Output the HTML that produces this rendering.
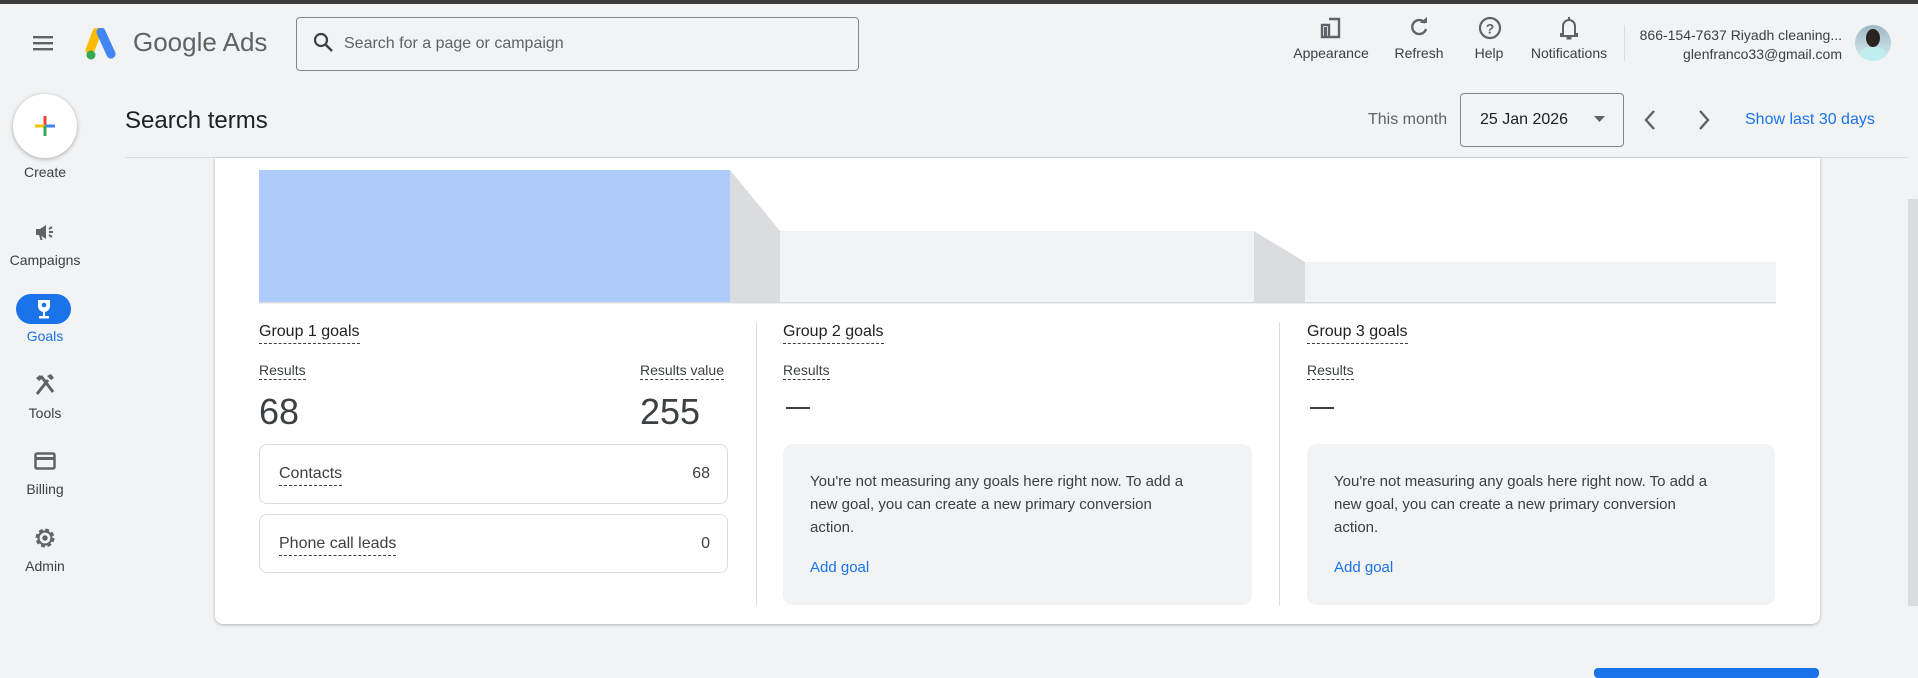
<!DOCTYPE html>
<html><head><meta charset="utf-8"><style>
*{box-sizing:border-box;margin:0;padding:0}
body{width:1918px;height:671px;overflow:hidden;background:#f1f3f4;font-family:"Liberation Sans",Arial,sans-serif;color:#3c4043;position:relative}
.a{position:absolute}
.lbl{font-size:14px;color:#3c4043;text-align:center;white-space:nowrap}
.dash{border-bottom:1.5px dashed #3c4043;padding-bottom:2px}
.dash2{border-bottom:1px dashed #3c4043;padding-bottom:1px}
.gbox{background:#f1f3f4;border-radius:10px}
.gbox p{font-size:15px;line-height:23px;color:#3c4043}
.gbox .ag{color:#1a73e8;font-size:15px}
</style></head><body>
<div class="a" style="left:0;top:0;width:1918px;height:4px;background:#3c3c3c"></div>
<svg class="a" style="left:32px;top:33px" width="24" height="20"><rect x="1" y="3" width="20" height="2.4" fill="#5f6368"/><rect x="1" y="9" width="20" height="2.4" fill="#5f6368"/><rect x="1" y="15" width="20" height="2.4" fill="#5f6368"/></svg>
<svg class="a" style="left:84px;top:28px" width="38" height="32" viewBox="0 0 38 32"><path d="M13 4 L6 22" stroke="#fbbc04" stroke-width="9" stroke-linecap="round"/><path d="M17 4 L27 26" stroke="#4285f4" stroke-width="9" stroke-linecap="round"/><circle cx="7" cy="27" r="4.5" fill="#34a853"/></svg>
<div class="a" style="left:133px;top:27px;font-size:26px;color:#5f6368">Google Ads</div>
<div class="a" style="left:296px;top:17px;width:563px;height:54px;border:1px solid #80868b;border-radius:4px"></div>
<svg class="a" style="left:312px;top:31px" width="24" height="24"><circle cx="9" cy="9" r="6" fill="none" stroke="#3c4043" stroke-width="2.2"/><path d="M13.5 13.5 L20 20" stroke="#3c4043" stroke-width="2.4"/></svg>
<div class="a" style="left:344px;top:35px;font-size:16px;color:#5f6368">Search for a page or campaign</div>
<svg class="a" style="left:1319px;top:16px" width="24" height="24"><path d="M3 9h7v12H3zM10 3h10v18h-10" fill="none" stroke="#5f6368" stroke-width="2.4"/><rect x="5" y="11" width="3" height="9" fill="#5f6368"/></svg>
<div class="a lbl" style="left:1291px;top:45px;width:80px">Appearance</div>
<svg class="a" style="left:1407px;top:15px" width="24" height="24"><path d="M18 8 A7 7 0 1 0 19 14" fill="none" stroke="#5f6368" stroke-width="2.4"/><path d="M13 8h7V2z" fill="#5f6368"/></svg>
<div class="a lbl" style="left:1389px;top:45px;width:60px">Refresh</div>
<svg class="a" style="left:1477px;top:15px" width="26" height="26"><circle cx="13" cy="13" r="10" fill="none" stroke="#5f6368" stroke-width="2.2"/><text x="13" y="18.5" font-size="14" font-weight="bold" text-anchor="middle" fill="#5f6368" font-family="Liberation Sans">?</text></svg>
<div class="a lbl" style="left:1469px;top:45px;width:40px">Help</div>
<svg class="a" style="left:1557px;top:15px" width="24" height="26"><path d="M6 19V11a6 6 0 0 1 12 0v8h2v2H4v-2z" fill="none" stroke="#5f6368" stroke-width="2"/><rect x="11" y="2" width="2" height="3" fill="#5f6368"/><rect x="9.5" y="22" width="5" height="2.5" fill="#5f6368"/></svg>
<div class="a lbl" style="left:1524px;top:45px;width:90px">Notifications</div>
<div class="a" style="left:1624px;top:25px;width:1px;height:36px;background:#dadce0"></div>
<div class="a" style="right:76px;top:26px;font-size:14px;text-align:right;line-height:19px;color:#3c4043">866-154-7637 Riyadh cleaning...<br>glenfranco33@gmail.com</div>
<div class="a" style="left:1855px;top:25px;width:36px;height:36px;border-radius:50%;overflow:hidden;background:linear-gradient(#9fb7c4,#d8eef2)"><div class="a" style="left:11px;top:4px;width:14px;height:18px;border-radius:50%;background:#2b2320"></div><div class="a" style="left:5px;top:22px;width:26px;height:20px;border-radius:40%;background:#bfeeee"></div></div>
<div class="a" style="left:13px;top:94px;width:64px;height:64px;border-radius:50%;background:#fff;box-shadow:0 1px 4px rgba(0,0,0,.3)"></div>
<svg class="a" style="left:33px;top:114px" width="24" height="24"><rect x="10.5" y="2" width="3" height="10" fill="#ea4335"/><rect x="2" y="10.5" width="10" height="3" fill="#fbbc04"/><rect x="12" y="10.5" width="10" height="3" fill="#4285f4"/><rect x="10.5" y="12" width="3" height="10" fill="#34a853"/></svg>
<div class="a lbl" style="left:10px;top:164px;width:70px">Create</div>
<svg class="a" style="left:33px;top:220px" width="24" height="24"><path d="M3 9h4l6-4v14l-6-4H3z" fill="#5f6368"/><path d="M6 15l1.5 5h2L8 15" fill="#5f6368"/><path d="M16 9l3-2M16 12h4M16 15l3 2" stroke="#5f6368" stroke-width="2"/></svg>
<div class="a lbl" style="left:0;top:252px;width:90px">Campaigns</div>
<div class="a" style="left:16px;top:294px;width:55px;height:30px;border-radius:15px;background:#1a73e8"></div>
<svg class="a" style="left:32px;top:297px" width="24" height="24"><path d="M6 3h12v6a6 6 0 0 1-12 0z" fill="#fff"/><circle cx="12" cy="8" r="2.3" fill="#1a73e8"/><rect x="11" y="14" width="2" height="5" fill="#fff"/><rect x="7" y="19" width="10" height="2.5" fill="#fff"/></svg>
<div class="a lbl" style="left:0;top:328px;width:90px;color:#1a73e8">Goals</div>
<svg class="a" style="left:33px;top:372px" width="24" height="26"><path d="M4 22L15 8M8 4l12 16" stroke="#5f6368" stroke-width="3"/><path d="M3 6l4-3 3 3-4 3z M14 4l4-2 3 4-3 2z" fill="#5f6368"/></svg>
<div class="a lbl" style="left:0;top:405px;width:90px">Tools</div>
<svg class="a" style="left:33px;top:449px" width="24" height="24"><rect x="2.5" y="4.5" width="19" height="15" rx="1.5" fill="none" stroke="#5f6368" stroke-width="2.5"/><rect x="3" y="8" width="18" height="3" fill="#5f6368"/></svg>
<div class="a lbl" style="left:0;top:481px;width:90px">Billing</div>
<svg class="a" style="left:32px;top:525px" width="26" height="26" viewBox="0 0 24 24"><circle cx="12" cy="12" r="7" fill="none" stroke="#5f6368" stroke-width="3.5" stroke-dasharray="3.3 2.2"/><circle cx="12" cy="12" r="6" fill="none" stroke="#5f6368" stroke-width="2"/><circle cx="12" cy="12" r="2.5" fill="#5f6368"/></svg>
<div class="a lbl" style="left:0;top:558px;width:90px">Admin</div>
<div class="a" style="left:125px;top:107px;font-size:24px;color:#202124">Search terms</div>
<div class="a" style="left:1368px;top:111px;font-size:16px;color:#5f6368">This month</div>
<div class="a" style="left:1460px;top:93px;width:164px;height:54px;border:1px solid #80868b;border-radius:4px"></div>
<div class="a" style="left:1480px;top:111px;font-size:16px;color:#202124">25 Jan 2026</div>
<svg class="a" style="left:1593px;top:114px" width="14" height="10"><path d="M1 2h11L6.5 8z" fill="#5f6368"/></svg>
<svg class="a" style="left:1641px;top:107px" width="20" height="26"><path d="M13 4L5 13l8 9" fill="none" stroke="#5f6368" stroke-width="2.4"/></svg>
<svg class="a" style="left:1694px;top:107px" width="20" height="26"><path d="M6 4l8 9-8 9" fill="none" stroke="#5f6368" stroke-width="2.4"/></svg>
<div class="a" style="left:1745px;top:111px;font-size:16px;color:#1a73e8">Show last 30 days</div>
<div class="a" style="left:125px;top:157px;width:1783px;height:1px;background:#dadce0"></div>
<div class="a" style="left:1908px;top:199px;width:10px;height:407px;background:#dadce0"></div>
<div class="a" style="left:215px;top:158px;width:1605px;height:466px;background:#fff;border-radius:0 0 8px 8px;box-shadow:0 1px 3px rgba(60,64,67,.35)"></div>
<svg class="a" style="left:259px;top:170px" width="1518" height="134">
<rect x="0" y="0" width="471" height="132" fill="#aecbfa"/>
<polygon points="471,0 521,61 521,132 471,132" fill="#dadce0"/>
<rect x="521" y="61" width="474" height="71" fill="#f1f3f4"/>
<polygon points="995,61 1046,92 1046,132 995,132" fill="#dadce0"/>
<rect x="1046" y="92" width="471" height="40" fill="#f1f3f4"/>
<rect x="0" y="132" width="1517" height="1.5" fill="#dadce0"/>
</svg>
<div class="a" style="left:756px;top:322px;width:1px;height:284px;background:#dadce0"></div>
<div class="a" style="left:1279px;top:322px;width:1px;height:284px;background:#dadce0"></div>
<div class="a dash" style="left:259px;top:323px;font-size:16px;color:#202124">Group 1 goals</div>
<div class="a dash2" style="left:259px;top:362px;font-size:14px">Results</div>
<div class="a dash2" style="right:1194px;top:362px;font-size:14px">Results value</div>
<div class="a" style="left:259px;top:391px;font-size:36px;color:#3c4043">68</div>
<div class="a" style="left:640px;top:391px;font-size:36px;color:#3c4043">255</div>
<div class="a" style="left:259px;top:444px;width:469px;height:60px;border:1px solid #dadce0;border-radius:8px"></div>
<div class="a dash" style="left:279px;top:465px;font-size:16px">Contacts</div>
<div class="a" style="left:680px;top:465px;width:30px;text-align:right;font-size:16px">68</div>
<div class="a" style="left:259px;top:514px;width:469px;height:59px;border:1px solid #dadce0;border-radius:8px"></div>
<div class="a dash" style="left:279px;top:535px;font-size:16px">Phone call leads</div>
<div class="a" style="left:680px;top:535px;width:30px;text-align:right;font-size:16px">0</div>
<div class="a dash" style="left:783px;top:323px;font-size:16px;color:#202124">Group 2 goals</div>
<div class="a dash2" style="left:783px;top:362px;font-size:14px">Results</div>
<div class="a" style="left:786px;top:407px;width:24px;height:2px;background:#3c4043"></div>
<div class="a gbox" style="left:783px;top:444px;width:469px;height:161px"><p class="a" style="left:27px;top:26px;width:385px">You're not measuring any goals here right now. To add a new goal, you can create a new primary conversion action.</p><div class="a ag" style="left:27px;top:115px">Add goal</div></div>
<div class="a dash" style="left:1307px;top:323px;font-size:16px;color:#202124">Group 3 goals</div>
<div class="a dash2" style="left:1307px;top:362px;font-size:14px">Results</div>
<div class="a" style="left:1310px;top:407px;width:24px;height:2px;background:#3c4043"></div>
<div class="a gbox" style="left:1307px;top:444px;width:468px;height:161px"><p class="a" style="left:27px;top:26px;width:385px">You're not measuring any goals here right now. To add a new goal, you can create a new primary conversion action.</p><div class="a ag" style="left:27px;top:115px">Add goal</div></div>
<div class="a" style="left:1594px;top:668px;width:225px;height:10px;background:#1a73e8;border-radius:4px"></div>
</body></html>
